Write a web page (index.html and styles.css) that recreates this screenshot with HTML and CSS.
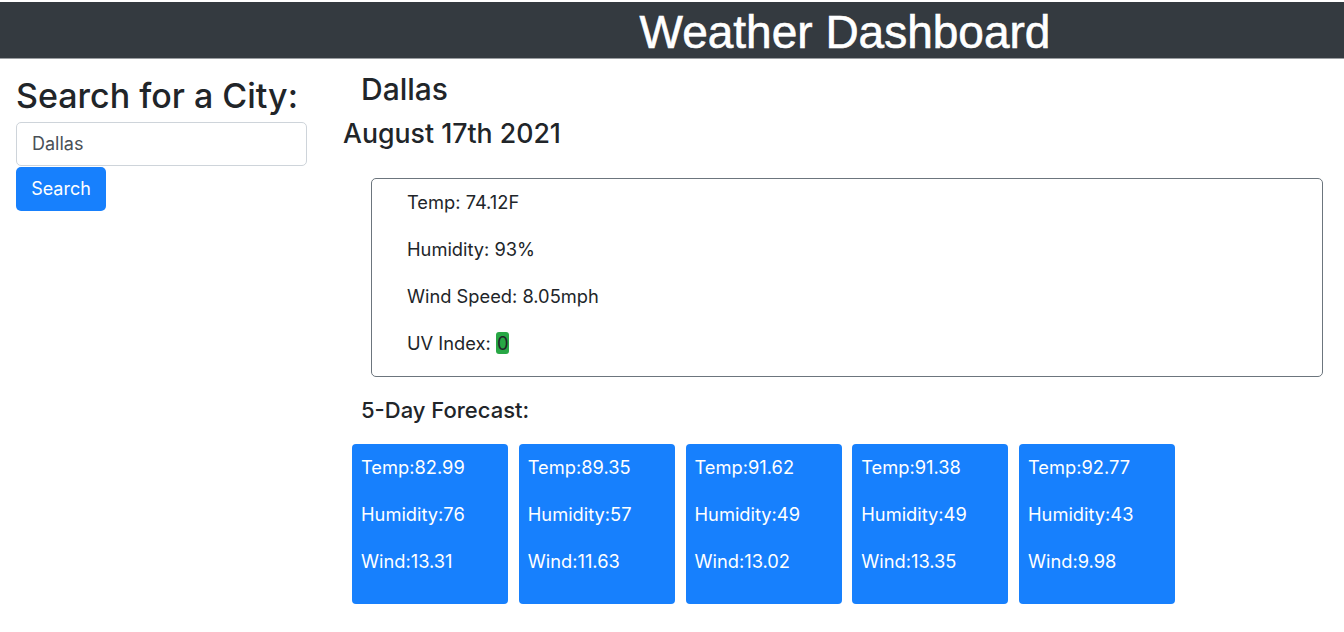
FILE: index.html
```html
<!DOCTYPE html>
<html lang="en">
<head>
<meta charset="utf-8">
<title>Weather Dashboard</title>
<link rel="stylesheet" href="styles.css">
</head>
<body>
<header class="topbar">
  <h1 class="title">Weather Dashboard</h1>
</header>
<main class="layout">
  <aside class="sidebar">
    <h2 class="search-title">Search for a City:</h2>
    <input class="search-input" type="text" value="Dallas">
    <button class="search-btn" type="button">Search</button>
  </aside>
  <section class="content">
    <h3 class="city">Dallas</h3>
    <h4 class="date">August 17th 2021</h4>
    <div class="current">
      <p>Temp: 74.12F</p>
      <p>Humidity: 93%</p>
      <p>Wind Speed: 8.05mph</p>
      <p>UV Index: <span class="uv">0</span></p>
    </div>
    <h5 class="forecast-title">5-Day Forecast:</h5>
    <div class="forecast">
      <div class="day"><p>Temp:82.99</p><p>Humidity:76</p><p>Wind:13.31</p></div>
      <div class="day"><p>Temp:89.35</p><p>Humidity:57</p><p>Wind:11.63</p></div>
      <div class="day"><p>Temp:91.62</p><p>Humidity:49</p><p>Wind:13.02</p></div>
      <div class="day"><p>Temp:91.38</p><p>Humidity:49</p><p>Wind:13.35</p></div>
      <div class="day"><p>Temp:92.77</p><p>Humidity:43</p><p>Wind:9.98</p></div>
    </div>
  </section>
</main>
</body>
</html>
```
FILE: styles.css
```css
* { box-sizing: border-box; }
body {
  margin: 0;
  font-family: Inter, "Liberation Sans", sans-serif;
  font-size: 18.3px;
  line-height: 28.2px;
  color: #212529;
  background: #fff;
}
p { margin: 0 0 18.8px 0; }

.topbar {
  margin-top: 2px;
  height: 57px;
  background: #343a40;
  border-bottom: 1px solid #9a9da1;
  display: flex;
  align-items: center;
  padding-left: 346px;
}
.title {
  flex: 1;
  margin: 0;
  padding-top: 4px;
  text-align: center;
  color: #fff;
  font-family: "Liberation Sans", sans-serif;
  font-weight: 400;
  font-size: 46px;
  line-height: 1;
  -webkit-text-stroke: 0.6px #fff;
}

.layout { display: flex; }
.sidebar {
  width: 336px;
  padding-left: 16px;
  padding-top: 17px;
}
.search-title {
  margin: 0 0 5px 0;
  font-size: 34px;
  font-weight: 500;
  line-height: 1.2;
}
.search-input {
  display: block;
  width: 291px;
  height: 44px;
  padding: 0 15px;
  border: 1px solid #ced4da;
  border-radius: 5px;
  font-family: inherit;
  font-size: 18px;
  color: #495057;
  margin: 0;
}
.search-btn {
  display: block;
  margin-top: 1px;
  width: 90px;
  height: 44px;
  border: none;
  border-radius: 5px;
  background: #1780fd;
  color: #fff;
  font-family: inherit;
  font-size: 18px;
}

.content { flex: 1; padding-top: 12px; }
.city {
  margin: 0 0 10px 25px;
  font-size: 30px;
  font-weight: 500;
  line-height: 1.2;
}
.date {
  margin: 0 0 29px 7px;
  font-size: 26.7px;
  font-weight: 500;
  line-height: 1.2;
}
.current {
  margin-left: 35px;
  width: 952px;
  border: 1px solid #6c757d;
  border-radius: 5px;
  padding: 9px 35px 0 35px;
}
.uv {
  background: #28a745;
  border-radius: 3px;
  padding: 0 1px;
}
.forecast-title {
  margin: 20px 0 21px 25px;
  font-size: 22px;
  font-weight: 500;
  line-height: 1.2;
}
.forecast {
  display: flex;
  gap: 10.75px;
  margin-left: 16px;
}
.day {
  width: 156px;
  background: #1780fd;
  color: #fff;
  border-radius: 4px;
  padding: 9px 9px 10px 9px;
}
```
